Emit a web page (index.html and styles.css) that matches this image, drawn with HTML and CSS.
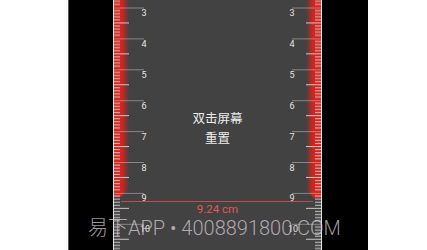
FILE: index.html
```html
<!DOCTYPE html>
<html lang="zh">
<head>
<meta charset="utf-8">
<title>Ruler</title>
<link rel="stylesheet" href="styles.css">
</head>
<body>
<div class="page">
  <div class="screen">
    <div class="ruler">
      <svg class="ticks" width="207" height="250" viewBox="0 0 207 250" xmlns="http://www.w3.org/2000/svg">
        <defs>
          <linearGradient id="redL" x1="0" y1="0" x2="1" y2="0">
            <stop offset="0" stop-color="#d8231d"/>
            <stop offset="0.5" stop-color="#d8231d"/>
            <stop offset="1" stop-color="#d8231d" stop-opacity="0"/>
          </linearGradient>
          <linearGradient id="redR" x1="1" y1="0" x2="0" y2="0">
            <stop offset="0" stop-color="#d8231d"/>
            <stop offset="0.5" stop-color="#d8231d"/>
            <stop offset="1" stop-color="#d8231d" stop-opacity="0"/>
          </linearGradient>
          <pattern id="mm" x="0" y="7.5" width="207" height="30.9" patternUnits="userSpaceOnUse">
            <g stroke="#c9c9c9" stroke-width="1">
              <line x1="0" y1="0" x2="30" y2="0"/>
              <line x1="0" y1="3.09" x2="6" y2="3.09"/>
              <line x1="0" y1="6.18" x2="6" y2="6.18"/>
              <line x1="0" y1="9.27" x2="6" y2="9.27"/>
              <line x1="0" y1="12.36" x2="6" y2="12.36"/>
              <line x1="0" y1="15.45" x2="15" y2="15.45"/>
              <line x1="0" y1="18.54" x2="6" y2="18.54"/>
              <line x1="0" y1="21.63" x2="6" y2="21.63"/>
              <line x1="0" y1="24.72" x2="6" y2="24.72"/>
              <line x1="0" y1="27.81" x2="6" y2="27.81"/>
              <line x1="178" y1="0" x2="207" y2="0"/>
              <line x1="201" y1="3.09" x2="207" y2="3.09"/>
              <line x1="201" y1="6.18" x2="207" y2="6.18"/>
              <line x1="201" y1="9.27" x2="207" y2="9.27"/>
              <line x1="201" y1="12.36" x2="207" y2="12.36"/>
              <line x1="192" y1="15.45" x2="207" y2="15.45"/>
              <line x1="201" y1="18.54" x2="207" y2="18.54"/>
              <line x1="201" y1="21.63" x2="207" y2="21.63"/>
              <line x1="201" y1="24.72" x2="207" y2="24.72"/>
              <line x1="201" y1="27.81" x2="207" y2="27.81"/>
            </g>
          </pattern>
        </defs>
        <path d="M0 0 H15 V189 L7 197 H0 Z" fill="url(#redL)"/>
        <path d="M192 0 H207 V198 H200 L192 190 Z" fill="url(#redR)"/>
        <rect x="0" y="0" width="207" height="250" fill="url(#mm)"/>
        <g class="num" text-anchor="middle">
          <text x="30" y="16">3</text>
          <text x="30" y="46.9">4</text>
          <text x="30" y="77.8">5</text>
          <text x="30" y="108.7">6</text>
          <text x="30" y="139.6">7</text>
          <text x="30" y="170.5">8</text>
          <text x="30" y="201.4">9</text>
          <text x="31" y="232.3">10</text>
          <text x="178" y="16">3</text>
          <text x="178" y="46.9">4</text>
          <text x="178" y="77.8">5</text>
          <text x="178" y="108.7">6</text>
          <text x="178" y="139.6">7</text>
          <text x="178" y="170.5">8</text>
          <text x="178" y="201.4">9</text>
          <text x="179" y="232.3">10</text>
        </g>
      </svg>
      <div class="hint">双击屏幕<br>重置</div>
      <div class="measure">
        <div class="measure-line"></div>
        <div class="measure-value">9.24 cm</div>
      </div>
    </div>
  </div>
  <div class="watermark">易下APP • 4008891800.COM</div>
</div>
</body>
</html>
```
FILE: styles.css
```css
html, body {
  margin: 0;
  padding: 0;
  background: #ffffff;
}
.page {
  position: relative;
  width: 427px;
  height: 250px;
  overflow: hidden;
}
.screen {
  margin-left: 68px;
  width: 299px;
  height: 250px;
  background: #000000;
  border-left: 1px solid #5a5a5a;
  display: flex;
}
.ruler {
  position: relative;
  margin-left: 44px;
  width: 207px;
  height: 250px;
  background: #424242;
  border-left: 1px solid #e2e2e2;
  border-right: 1px solid #e2e2e2;
  display: flex;
  flex-direction: column;
  align-items: center;
}
.ticks {
  position: absolute;
  left: 0;
  top: 0;
  display: block;
}
.num text {
  font-family: Roboto, "DejaVu Sans", sans-serif;
  font-size: 9px;
  fill: #e4e4e4;
}
.hint {
  position: relative;
  margin-top: 108px;
  font-family: "Noto Sans CJK SC", sans-serif;
  font-size: 12.5px;
  line-height: 19.5px;
  color: #ececec;
  text-align: center;
}
.measure {
  position: relative;
  align-self: stretch;
  margin-top: 54px;
  display: flex;
  flex-direction: column;
  align-items: center;
}
.measure-line {
  align-self: stretch;
  height: 1px;
  margin: 0 8px 0 7px;
  background: #b5524e;
}
.measure-value {
  font-family: Roboto, "DejaVu Sans", sans-serif;
  font-size: 11.5px;
  line-height: 14px;
  color: #e0584f;
}
.watermark {
  position: absolute;
  left: 88px;
  top: 218px;
  font-family: Roboto, "Noto Sans CJK SC", sans-serif;
  font-weight: 300;
  font-size: 20px;
  line-height: 20px;
  color: rgba(222, 208, 222, 0.72);
  white-space: nowrap;
}
```
